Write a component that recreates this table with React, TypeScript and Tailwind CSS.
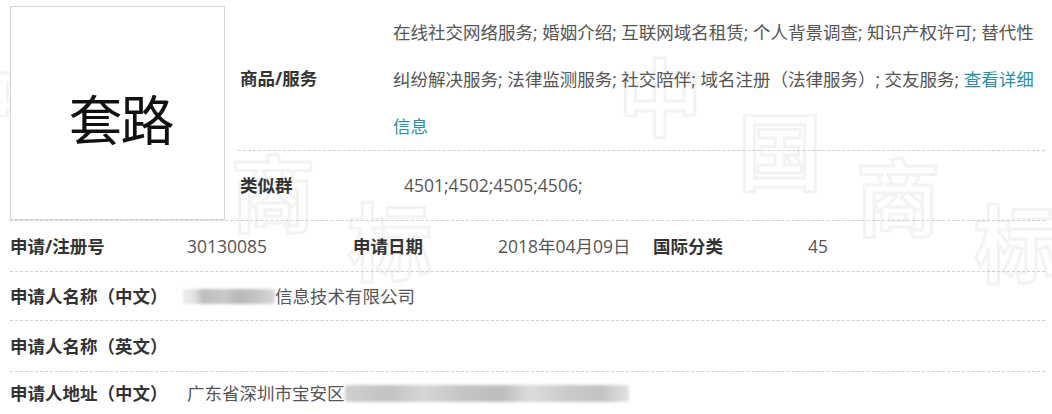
import React from 'react';

const font = 'font-["Open_Sans","Noto_Sans_CJK_SC",sans-serif]';

const Blur: React.FC<{ className: string }> = ({ className }) => (
  <span className={`inline-block align-middle rounded-[3px] blur-[1.5px] ${className}`} />
);

// faint "中国商标" stamp behind the table
const Watermark: React.FC = () => (
  <div
    aria-hidden="true"
    className='pointer-events-none absolute inset-0 z-0 select-none font-["Noto_Sans_CJK_SC",sans-serif] font-bold text-[84px] leading-none text-transparent [-webkit-text-stroke:3px_#f3f3f3]'
  >
    <span className="absolute left-[-10px] top-[52px]">中</span>
    <span className="absolute left-[231px] top-[148px]">商</span>
    <span className="absolute left-[348px] top-[196px]">标</span>
    <span className="absolute left-[618px] top-[52px]">中</span>
    <span className="absolute left-[738px] top-[106px]">国</span>
    <span className="absolute left-[856px] top-[152px]">商</span>
    <span className="absolute left-[974px] top-[198px]">标</span>
  </div>
);

const App: React.FC = () => {
  return (
    <div className={`relative h-[414px] w-[1052px] overflow-hidden bg-white ${font} text-[17.5px]`}>
      <Watermark />

      <div className="relative z-10 pl-[10px] pr-[7px] pt-[6px]">
        {/* Top: logo + goods */}
        <div className="flex border-b border-dashed border-[#cfcfcf]">
          <div className="flex h-[214px] w-[215px] shrink-0 items-center justify-center border border-[#d4d4d4] bg-white pl-[6px] pt-[14px]">
            <span className="text-[54px] leading-none text-[#111] tracking-[-2px]">套路</span>
          </div>

          <div className="ml-[13px] flex-1">
            <div className="flex h-[145px] items-center border-b border-dashed border-[#cfcfcf]">
              <div className="w-[155px] shrink-0 pl-[2px] font-bold text-[#333]">商品/服务</div>
              <p className="flex-1 pt-[2px] leading-[47px] text-[#555]">
                在线社交网络服务; 婚姻介绍; 互联网域名租赁; 个人背景调查; 知识产权许可; 替代性纠纷解决服务; 法律监测服务; 社交陪伴; 域名注册（法律服务）; 交友服务;{' '}
                <a className="text-[#2e8ea6]">查看详细信息</a>
              </p>
            </div>
            <div className="flex h-[69px] items-center">
              <div className="w-[155px] shrink-0 pl-[2px] font-bold text-[#333]">类似群</div>
              <div className="pl-[11px] text-[#555]">4501;4502;4505;4506;</div>
            </div>
          </div>
        </div>

        {/* Detail rows */}
        <div className="flex h-[51px] items-center border-b border-dashed border-[#cfcfcf]">
          <div className="w-[177px] shrink-0 font-bold text-[#333]">申请/注册号</div>
          <div className="w-[166px] shrink-0 text-[#555]">30130085</div>
          <div className="w-[145px] shrink-0 font-bold text-[#333]">申请日期</div>
          <div className="w-[155px] shrink-0 text-[#555]">2018年04月09日</div>
          <div className="w-[155px] shrink-0 font-bold text-[#333]">国际分类</div>
          <div className="text-[#555]">45</div>
        </div>

        <div className="flex h-[49px] items-center border-b border-dashed border-[#cfcfcf]">
          <div className="w-[173px] shrink-0 font-bold text-[#333]">申请人名称（中文）</div>
          <div className="flex items-center text-[#555]">
            <Blur className="h-[15px] w-[92px] bg-[linear-gradient(90deg,#ececec_0%,#e2e2e2_12%,#bdbdbd_22%,#c9c9c9_45%,#b8b8b8_60%,#c4c4c4_80%,#d9d9d9_100%)]" />
            <span>信息技术有限公司</span>
          </div>
        </div>

        <div className="flex h-[51px] items-center border-b border-dashed border-[#cfcfcf]">
          <div className="w-[177px] shrink-0 font-bold text-[#333]">申请人名称（英文）</div>
        </div>

        <div className="flex h-[42px] items-center">
          <div className="w-[177px] shrink-0 font-bold text-[#333]">申请人地址（中文）</div>
          <div className="flex items-center text-[#555]">
            <span>广东省深圳市宝安区</span>
            <Blur className="h-[17px] w-[284px] bg-[linear-gradient(90deg,#cfcfcf_0%,#c2c2c2_15%,#d6d6d6_28%,#c6c6c6_40%,#bcbcbc_55%,#dcdcdc_65%,#cacaca_78%,#c2c2c2_90%,#e2e2e2_100%)]" />
          </div>
        </div>
      </div>
    </div>
  );
};

export default App;
